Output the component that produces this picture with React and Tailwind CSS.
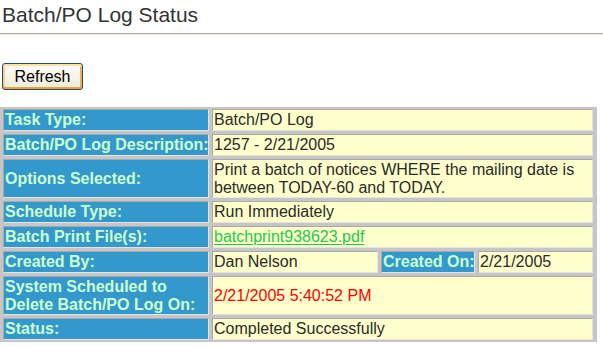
const rows = [
  { label: "Task Type:", value: "Batch/PO Log" },
  { label: "Batch/PO Log Description:", value: "1257 - 2/21/2005" },
  {
    label: "Options Selected:",
    value: (
      <>
        Print a batch of notices WHERE the mailing date is
        <br />
        between TODAY-60 and TODAY.
      </>
    ),
    tall: true,
  },
  { label: "Schedule Type:", value: "Run Immediately" },
  {
    label: "Batch Print File(s):",
    value: (
      <a href="#" className="text-[#1ec94a] underline underline-offset-2">
        batchprint938623.pdf
      </a>
    ),
  },
  { label: "Created By:", created: true },
  {
    label: (
      <>
        System Scheduled to
        <br />
        Delete Batch/PO Log On:
      </>
    ),
    value: <span className="text-[#ff0000]">2/21/2005 5:40:52 PM</span>,
    tall: true,
  },
  { label: "Status:", value: "Completed Successfully" },
];

const cell = "border border-t-[#a9a9a9] border-l-[#a9a9a9] border-b-[#e4e4e4] border-r-[#e4e4e4] px-[1px] py-[1px] flex items-center whitespace-nowrap";
const labelCell = `${cell} bg-[#3399cc] text-[#ccffcc] font-bold`;
const valueCell = `${cell} bg-[#ffffcc] text-[#2a2a2a]`;

export default function App() {
  return (
    <div className="w-[603px] h-[347px] overflow-hidden bg-white font-['Liberation_Sans',Arial,sans-serif]">
      <h1 className="mt-[3px] pl-[2px] text-[21px] leading-[24px] text-[#333]">Batch/PO Log Status</h1>
      <div className="mt-[6px] h-[1px] bg-[#b3ab98]" />
      <div className="h-[1px] bg-[#ece9e2]" />

      <div className="mt-[28px] pl-[2px]">
        <button className="w-[81px] h-[27px] rounded-[3px] border border-[#1c4a7a] bg-gradient-to-b from-[#fffdf6] to-[#efebdd] text-[16px] leading-[18px] text-black shadow-[inset_0_2px_0_#fde3a0,inset_0_-2px_0_#eca52a,inset_2px_0_0_#fbd57c,inset_-2px_0_0_#f0b445]">
          Refresh
        </button>
      </div>

      <div className="mt-[17px] w-[597px] bg-[#c6c6c6] pl-[3px] pr-[4px] py-[2px] grid grid-cols-[206px_1fr] gap-[3px] text-[16px] leading-[18px]">
        {rows.map((r, i) => (
          <Row key={i} row={r} />
        ))}
      </div>
    </div>
  );
}

function Row({ row }) {
  const h = row.tall ? "h-[39px]" : "h-[22px]";
  return (
    <>
      <div className={`${labelCell} ${h}`}>
        <span>{row.label}</span>
      </div>
      {row.created ? (
        <div className={`flex gap-[3px] ${h}`}>
          <div className={`${valueCell} w-[166px]`}>Dan Nelson</div>
          <div className={`${labelCell} w-[94px]`}>Created On:</div>
          <div className={`${valueCell} flex-1`}>2/21/2005</div>
        </div>
      ) : (
        <div className={`${valueCell} ${h}`}>
          <span>{row.value}</span>
        </div>
      )}
    </>
  );
}
